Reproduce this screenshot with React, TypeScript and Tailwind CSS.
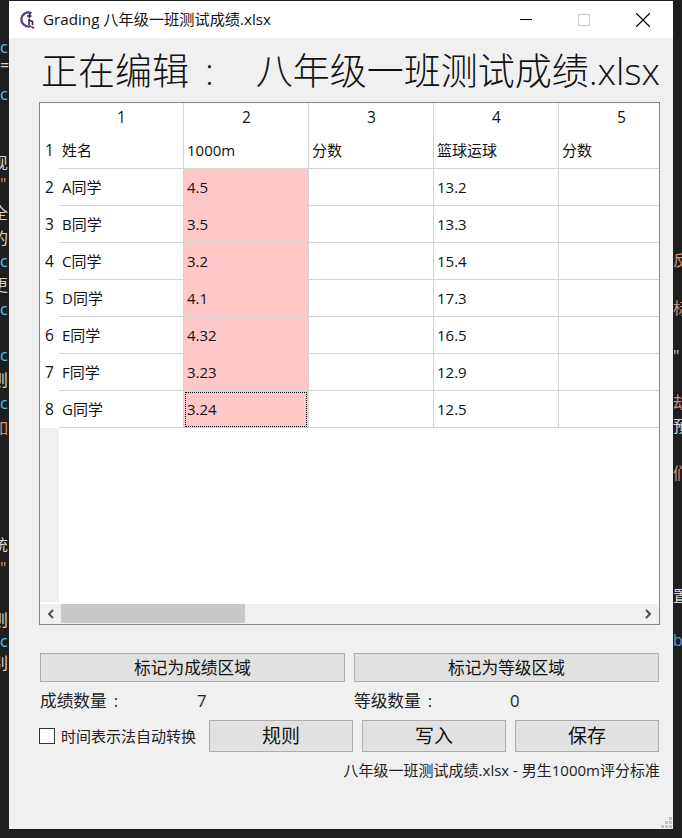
import { X } from "lucide-react";

const FONT = "font-['Open_Sans','Noto_Sans_CJK_SC',sans-serif]";

const leftCode = [
  { t: "c", y: 39, c: "#4fc1ff", x: 0 },
  { t: "=,", y: 57, c: "#d4d4d4", x: 0 },
  { t: "c", y: 86, c: "#4fc1ff", x: 0 },
  { t: "现", y: 155, c: "#d4d4d4", x: -8 },
  { t: '"', y: 176, c: "#ce9178", x: 0 },
  { t: "全", y: 205, c: "#d4d4d4", x: -8 },
  { t: "的", y: 230, c: "#d4d4d4", x: -8 },
  { t: "c", y: 253, c: "#4fc1ff", x: 0 },
  { t: "更", y: 277, c: "#d4d4d4", x: -8 },
  { t: "c", y: 301, c: "#4fc1ff", x: 0 },
  { t: "c", y: 347, c: "#4fc1ff", x: 0 },
  { t: "则", y: 372, c: "#d4d4d4", x: -8 },
  { t: "c", y: 395, c: "#4fc1ff", x: 0 },
  { t: "如", y: 420, c: "#ce9178", x: -8 },
  { t: "统", y: 537, c: "#d4d4d4", x: -8 },
  { t: '"', y: 560, c: "#ce9178", x: 0 },
  { t: "则", y: 612, c: "#d4d4d4", x: -8 },
  { t: "c", y: 633, c: "#4fc1ff", x: 0 },
  { t: "别", y: 655, c: "#d4d4d4", x: -8 },
];

const rightCode = [
  { t: "反", y: 252, c: "#ce9178" },
  { t: "标", y: 300, c: "#ce9178" },
  { t: '"', y: 348, c: "#d7ba7d" },
  { t: "劫", y: 394, c: "#ce9178" },
  { t: "預", y: 418, c: "#d4d4d4" },
  { t: "们", y: 465, c: "#ce9178" },
  { t: "置", y: 588, c: "#d4d4d4" },
  { t: "b", y: 632, c: "#569cd6" },
];

const rows = [
  ["姓名", "1000m", "分数", "篮球运球", "分数"],
  ["A同学", "4.5", "", "13.2", ""],
  ["B同学", "3.5", "", "13.3", ""],
  ["C同学", "3.2", "", "15.4", ""],
  ["D同学", "4.1", "", "17.3", ""],
  ["E同学", "4.32", "", "16.5", ""],
  ["F同学", "3.23", "", "12.9", ""],
  ["G同学", "3.24", "", "12.5", ""],
];

const Strip = ({ items, className }: { items: { t: string; y: number; c: string; x?: number }[]; className: string }) => (
  <div className={`relative overflow-hidden ${className}`}>
    {items.map((item, i) => (
      <span
        key={i}
        className="absolute text-[16px] leading-4"
        style={{ top: item.y, left: item.x ?? 0, color: item.c }}
      >
        {item.t}
      </span>
    ))}
  </div>
);

const AppIcon = () => (
  <svg width="18" height="18" viewBox="0 0 18 18" fill="none">
    <path d="M12.5 2.2A7 7 0 1 0 12 15" stroke="#5b3a86" strokeWidth="2.2" />
    <path d="M12.5 15.5l2.5 2" stroke="#8a3a6a" strokeWidth="2" />
    <path d="M8 5h4.5M10.5 2.5v5M10 8v6M10 9l3.5 1.5V14" stroke="#1f2530" strokeWidth="1.5" />
  </svg>
);

const Button = ({ label, className }: { label: string; className: string }) => (
  <button className={`border border-[#adadad] bg-[#e1e1e1] text-[#111] flex items-center justify-center ${className}`}>
    {label}
  </button>
);

export default function App() {
  return (
    <div className={`w-[682px] h-[838px] bg-[#1e1e1e] flex text-black overflow-hidden ${FONT}`}>
      <Strip items={leftCode} className="w-[9px] h-full" />
      <div className="w-[664px] h-[828px] mt-px bg-[#f0f0f0] flex flex-col relative">
        {/* title bar */}
        <div className="h-[37px] shrink-0 bg-white flex items-center">
          <div className="ml-[10px] mr-[6px] flex">
            <AppIcon />
          </div>
          <span className="text-[15.2px] text-[#111]">Grading 八年级一班测试成绩.xlsx</span>
          <div className="ml-auto flex items-center h-full">
            <div className="w-[12px] h-px bg-black mr-[46px]" />
            <div className="w-[12px] h-[12px] border border-[#cccccc] mr-[40px]" />
            <X size={26} strokeWidth={1} className="mr-[17px] text-black" />
          </div>
        </div>

        <div className="pl-[30px] pr-[13px] flex flex-col flex-1">
          {/* heading */}
          <div className="h-[64px] shrink-0 flex items-center pl-[2px] text-[37px] font-light text-[#111] whitespace-pre leading-none">
            正在编辑<span className="ml-[16px] w-[55px]">:</span>
            <span>八年级一班测试成绩.xlsx</span>
          </div>

          {/* sheet */}
          <div className="h-[523px] w-[621px] shrink-0 border border-[#82878f] bg-white flex flex-col overflow-hidden">
            <div className="flex-1 flex flex-col min-h-0 overflow-hidden text-[15px] text-[#111]">
              <div className="flex h-[29px] shrink-0 text-[15.5px]">
                <div className="w-[19px] shrink-0" />
                {[1, 2, 3, 4, 5].map((n) => (
                  <div key={n} className="w-[125px] shrink-0 border-r border-[#d4d4d4] flex items-center justify-center pl-px">
                    {n}
                  </div>
                ))}
              </div>
              {rows.map((row, r) => (
                <div key={r} className="flex shrink-0 h-[37px]">
                  <div className="w-[19px] shrink-0 flex items-center justify-center text-[15.5px]">{r + 1}</div>
                  {row.map((cell, c) => (
                    <div
                      key={c}
                      className={`w-[125px] shrink-0 border-r border-b border-[#d4d4d4] flex items-center pl-[3px] ${
                        c === 1 && r > 0 ? "bg-[#ffc8c8]" : ""
                      }`}
                    >
                      {r === 7 && c === 1 ? (
                        <div className="w-[122px] h-[35px] -ml-[2px] pl-[1px] border border-dotted border-black flex items-center">
                          {cell}
                        </div>
                      ) : (
                        cell
                      )}
                    </div>
                  ))}
                </div>
              ))}
              <div className="flex flex-1">
                <div className="w-[19px] h-[174px] bg-[#f0f0f0]" />
              </div>
            </div>
            {/* horizontal scrollbar */}
            <div className="h-[20px] shrink-0 bg-[#f0f0f0] flex items-center">
              <svg width="21" height="20" viewBox="0 0 21 20" fill="none" className="shrink-0">
                <path d="M13 6l-4 4 4 4" stroke="#505050" strokeWidth="2" />
              </svg>
              <div className="w-[184px] h-[19px] self-start bg-[#c8c8c8]" />
              <svg width="21" height="20" viewBox="0 0 21 20" fill="none" className="ml-auto shrink-0">
                <path d="M8 6l4 4-4 4" stroke="#505050" strokeWidth="2" />
              </svg>
            </div>
          </div>

          {/* actions */}
          <div className="w-[620px] ml-px mt-[28px] flex flex-col text-[16.7px] text-[#222]">
            <div className="flex gap-[9px]">
              <Button label="标记为成绩区域" className="w-[305px] h-[29px]" />
              <Button label="标记为等级区域" className="w-[305px] h-[29px]" />
            </div>
            <div className="flex h-[38px] items-center">
              <div className="w-[314px] flex items-center">
                <span className="w-[157px]">
                  成绩数量<span className="ml-[7px]">:</span>
                </span>
                <span>7</span>
              </div>
              <div className="flex items-center">
                <span className="w-[156px]">
                  等级数量<span className="ml-[7px]">:</span>
                </span>
                <span>0</span>
              </div>
            </div>
            <div className="flex items-center h-[32px] text-[15px]">
              <div className="w-[16px] h-[16px] -ml-px border border-[#333] bg-white shrink-0" />
              <span className="ml-[6px] w-[148px] whitespace-nowrap">时间表示法自动转换</span>
              <div className="flex gap-[9px] text-[19px] text-[#111]">
                <Button label="规则" className="w-[144px] h-[32px]" />
                <Button label="写入" className="w-[144px] h-[32px]" />
                <Button label="保存" className="w-[144px] h-[32px]" />
              </div>
            </div>
            <div className="h-[36px] flex items-center justify-end text-[15px] whitespace-nowrap">
              八年级一班测试成绩.xlsx - 男生1000m评分标准
            </div>
          </div>
        </div>

        {/* resize grip */}
        <div className="absolute right-[1px] bottom-[1px] w-[11px] h-[11px] grid grid-cols-3 gap-[1px]">
          {[0, 0, 1, 0, 1, 1, 1, 1, 1].map((on, i) => (
            <div key={i} className={on ? "bg-[#c4c4c4]" : ""} />
          ))}
        </div>
      </div>
      <Strip items={rightCode} className="flex-1 h-full" />
    </div>
  );
}
